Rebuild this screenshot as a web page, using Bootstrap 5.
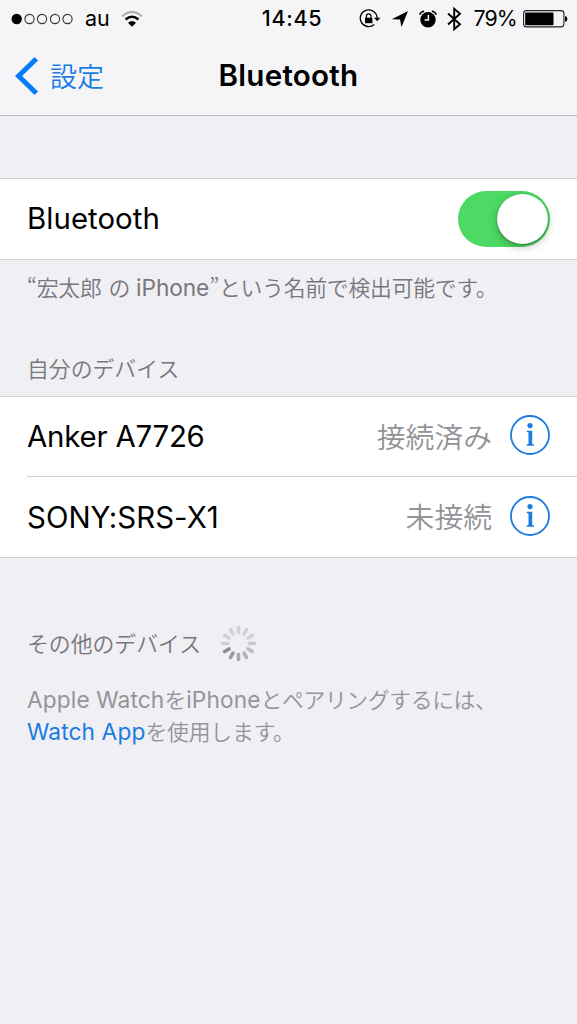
<!DOCTYPE html>
<html lang="ja">
<head>
<meta charset="utf-8">
<meta name="viewport" content="width=device-width, initial-scale=1">
<title>Bluetooth</title>
<link href="https://cdn.jsdelivr.net/npm/bootstrap@5.3.0/dist/css/bootstrap.min.css" rel="stylesheet">
<style>
  body { font-family: Inter, "Noto Sans CJK JP", sans-serif; font-weight: 400; background: #efeff4; color: #000; line-height: 1; min-height: 1024px; overflow: hidden; }
  svg { display: block; flex: none; }
  .ios-blue { color: #1a7be0; }
  .jp { font-family: "Noto Sans CJK JP DemiLight", "Noto Sans CJK JP", sans-serif; font-weight: 350; }
  .latin { font-family: Inter, sans-serif; font-weight: 400; font-size: 22.7px; line-height: 1; letter-spacing: .12px; }
  .top-area { height: 116px; background: #f5f5f8; border-bottom: 1px solid #b9b9bf; }
  .status { height: 36px; font-size: 21.5px; padding-top: 1px; }
  .clock { letter-spacing: .7px; margin-left: 3.5px; }
  .pct { letter-spacing: -.8px; font-size: 21.3px; margin-left: 11px; }
  .title-row { height: 79px; }
  .back { font-size: 27px; padding-left: 15px; gap: 11px; }
  .page-title { font-size: 29.6px; font-weight: 600; letter-spacing: .25px; padding-top: 1px; }
  .cells { border-top: 1px solid #cfcfd3; border-bottom: 1px solid #cfcfd3; background: #fff; border-radius: 0; }
  .cell { height: 80px; padding: 0 27px; background: #fff; font-size: 29.4px; border: 0; }
  .cell-line { border-top: 1px solid #cfcfd3; margin-left: 27px; }
  .state { font-size: 28.8px; color: #929297; margin-right: 18px; padding-bottom: 1px; }
  .note { font-size: 21.85px; color: #77777c; padding: 0 27px; line-height: 32px; white-space: nowrap; }
  .toggle { width: 92px; height: 56px; border-radius: 28px; background: #4cd964; padding: 3px 2px; }
  .knob { width: 51px; height: 50px; border-radius: 50%; background: #fff; box-shadow: 0 3px 8px rgba(0,0,0,.25), 0 1px 2px rgba(0,0,0,.3); }
  .pale { color: #949499; }
</style>
</head>
<body>
<header class="top-area">
  <div class="status d-flex align-items-center position-relative">
    <svg width="63" height="14" viewBox="0 0 63 14" style="margin-left:11px" fill="none" stroke="#333" stroke-width="1.1"><circle cx="5.7" cy="7" r="5.2" fill="#000" stroke="none"/><circle cx="18.5" cy="7" r="4.6"/><circle cx="31" cy="7" r="4.6"/><circle cx="44" cy="7" r="4.6"/><circle cx="56.5" cy="7" r="4.6"/></svg>
    <span style="margin-left:11px">au</span>
    <svg width="23" height="18" viewBox="0 0 23 18" style="margin-left:11px" fill="none" stroke-width="2.6"><path d="M1.2 6.2Q11 -2.2 20.8 6.2" stroke="#aaa" stroke-width="2"/><path d="M4.6 9.5Q11 4 17.4 9.5" stroke="#000"/><path d="M7 12.8Q11 9 15 12.8L11 16.7Z" fill="#000"/></svg>
    <span class="position-absolute start-50 translate-middle-x fw-medium clock">14:45</span>
    <div class="d-flex align-items-center ms-auto" style="padding-right:9px">
      <svg width="22" height="20" viewBox="0 0 22 20"><path d="M15.2 15.6A8.4 8.4 0 1 1 18.1 9" fill="none" stroke="#000" stroke-width="1.3"/><path d="M15 8.7H21.4L18.2 12.2Z"/><rect x="6" y="8.7" width="7.4" height="5.5"/><path d="M7.4 9V7.2a2.3 2.3 0 0 1 4.6 0V9" fill="none" stroke="#000" stroke-width="1.2"/></svg>
      <svg width="18" height="18" viewBox="0 0 18 18" style="margin-left:10px"><path d="M17 1L10.5 17L9 9.6L.8 9.2Z"/></svg>
      <svg width="18" height="18" viewBox="0 0 18 18" style="margin-left:10px"><circle cx="9" cy="9.7" r="7.7"/><path d="M.7 4.6Q2 1.5 5.1 1.2M17.3 4.6Q16 1.5 12.9 1.2" fill="none" stroke="#000" stroke-width="1.5"/><path d="M9.4 5V10H5.7" fill="none" stroke="#fff" stroke-width="1.4"/></svg>
      <svg width="15" height="24" viewBox="0 0 15 24" style="margin-left:10px" fill="none" stroke="#000" stroke-width="1.9"><path d="M1 6.5L13 17.2L7.2 22.2V1.8L13 6.8L1 17.5"/></svg>
      <span class="pct">79%</span>
      <svg width="45" height="18" viewBox="0 0 45 18" style="margin-left:6px"><rect x=".6" y=".6" width="40.3" height="16.3" rx="2.8" fill="none" stroke="#222" stroke-width="1.1"/><rect x="2.2" y="2.4" width="28.3" height="12.8" rx=".8"/><path d="M42 6q2.4.3 2.4 3t-2.4 3Z"/></svg>
    </div>
  </div>
  <nav class="title-row d-flex align-items-center position-relative">
    <a class="back d-flex align-items-center text-decoration-none ios-blue jp" href="#">
      <svg width="24" height="38" viewBox="0 0 24 38" fill="none" stroke="#087bf5" stroke-width="5"><path d="M21.3 1.8L3.6 19L21.3 36.2"/></svg>
      <span>設定</span>
    </a>
    <h1 class="page-title position-absolute start-50 translate-middle-x m-0">Bluetooth</h1>
  </nav>
</header>
<main>
  <div class="cells" style="margin-top:62px">
    <div class="cell d-flex align-items-center justify-content-between"><span style="letter-spacing:.05px">Bluetooth</span>
      <div class="toggle d-flex justify-content-end"><div class="knob"></div></div>
    </div>
  </div>
  <p class="note mb-0 jp" style="padding-top:11px;letter-spacing:-.25px">“宏太郎<span style="padding:0 6px 0 7px">の</span><span class="latin" style="letter-spacing:-.1px">iPhone</span>”という名前で検出可能です。</p>
  <h2 class="note mb-0 jp" style="padding-top:49px;padding-bottom:12px">自分のデバイス</h2>
  <div class="cells list-group">
    <div class="cell d-flex align-items-center" style="height:79px"><span class="me-auto" style="letter-spacing:-.2px">Anker A7726</span><span class="state jp">接続済み</span>
      <svg width="40" height="40" viewBox="0 0 40 40" fill="#1a7be0" style="margin-bottom:3px"><circle cx="20" cy="20" r="19" fill="none" stroke="#1a7be0" stroke-width="1.8"/><circle cx="20" cy="10.6" r="2.6"/><path d="M16.7 15.7H22.2V29L24 29.6V30.8H16.7V29.6L18.5 29V17.4L16.7 16.9Z"/></svg></div>
    <div class="cell-line"></div>
    <div class="cell d-flex align-items-center"><span class="me-auto" style="letter-spacing:.05px;padding-top:1px">SONY:SRS-X1</span><span class="state jp">未接続</span>
      <svg width="40" height="40" viewBox="0 0 40 40" fill="#1a7be0" style="margin-bottom:2px"><circle cx="20" cy="20" r="19" fill="none" stroke="#1a7be0" stroke-width="1.8"/><circle cx="20" cy="10.6" r="2.6"/><path d="M16.7 15.7H22.2V29L24 29.6V30.8H16.7V29.6L18.5 29V17.4L16.7 16.9Z"/></svg></div>
  </div>
  <div class="note d-flex align-items-center jp" style="margin-top:67px;height:37px"><span style="padding-bottom:2px">その他のデバイス</span>
    <svg width="37" height="37" viewBox="-18.5 -18.5 37 37" style="margin-left:19px" stroke-width="3.6" stroke-linecap="round" stroke="#d0d0d5">
      <path d="M0-16V-11"/><path d="M0-16V-11" transform="rotate(30)"/><path d="M0-16V-11" transform="rotate(60)"/><path d="M0-16V-11" transform="rotate(90)" stroke="#c8c8cc"/><path d="M0-16V-11" transform="rotate(120)" stroke="#bebec2"/><path d="M0-16V-11" transform="rotate(150)" stroke="#b3b3b7"/><path d="M0-16V-11" transform="rotate(180)" stroke="#a7a7ab"/><path d="M0-16V-11" transform="rotate(210)" stroke="#9b9b9f"/><path d="M0-16V-11" transform="rotate(240)" stroke="#8c8c90"/><path d="M0-16V-11" transform="rotate(270)"/><path d="M0-16V-11" transform="rotate(300)"/><path d="M0-16V-11" transform="rotate(330)"/></svg>
  </div>
  <p class="note pale mb-0 jp" style="margin-top:21px"><span class="latin">Apple Watch</span>を<span class="latin">iPhone</span><span style="letter-spacing:-.4px">とペアリングするには、</span><br><a class="latin ios-blue text-decoration-none" href="#">Watch App</a><span style="letter-spacing:-.2px">を使用します。</span></p>
</main>
<script src="https://cdn.jsdelivr.net/npm/bootstrap@5.3.0/dist/js/bootstrap.bundle.min.js"></script>
</body>
</html>
